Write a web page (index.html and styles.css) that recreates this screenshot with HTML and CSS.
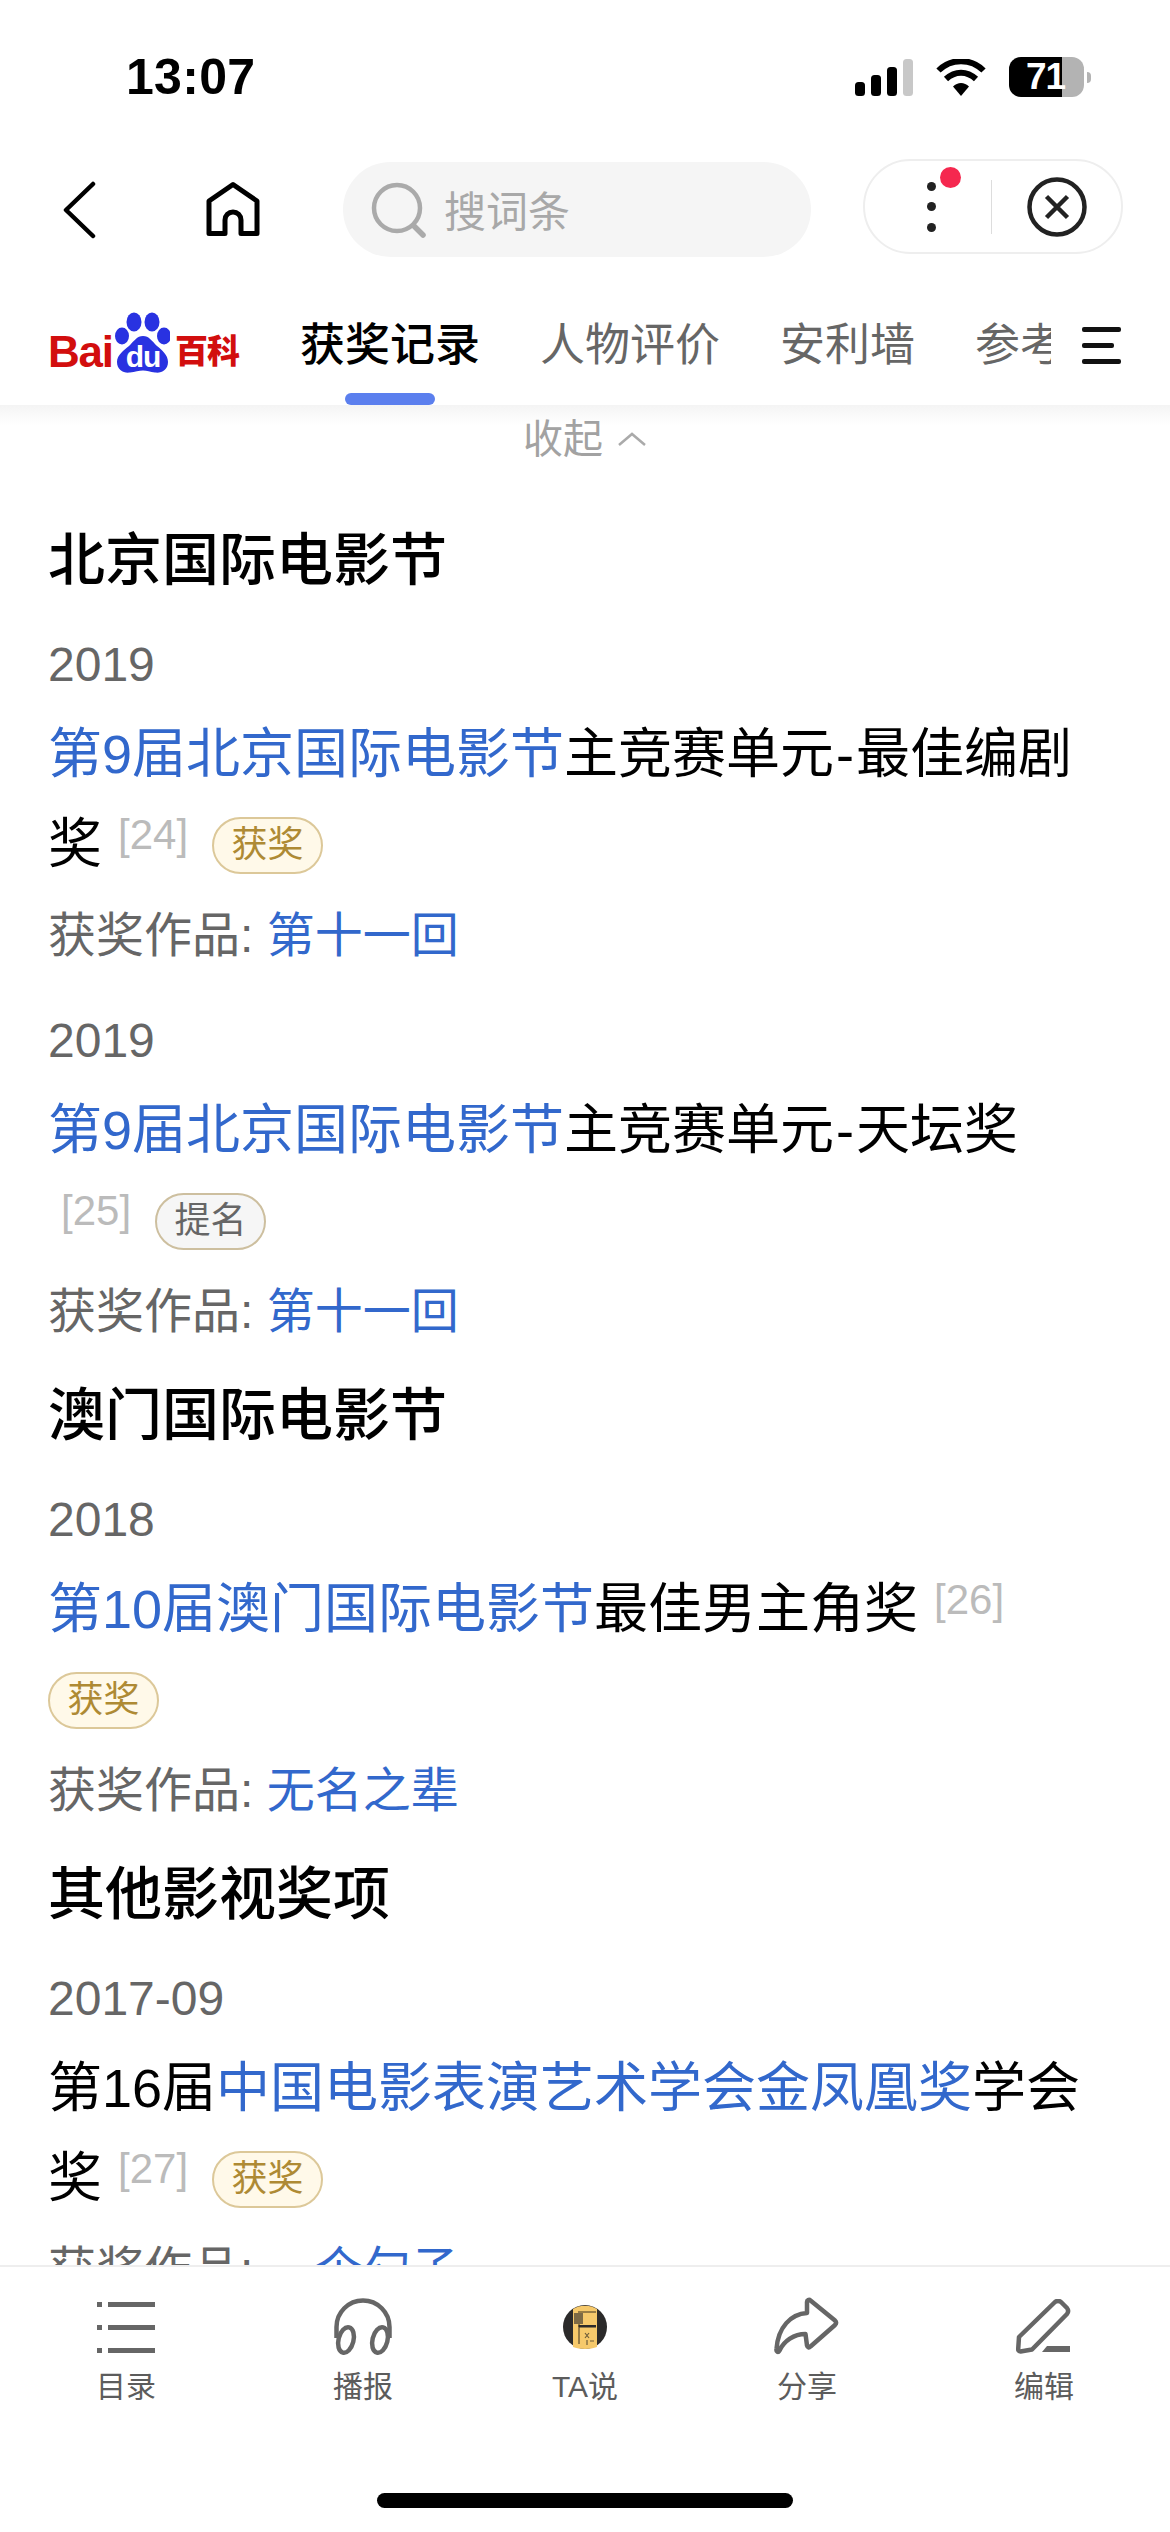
FILE: index.html
```html
<!DOCTYPE html>
<html lang="zh">
<head>
<meta charset="utf-8">
<title>获奖记录</title>
<link rel="stylesheet" href="styles.css">
</head>
<body>
<div class="page">
  <div class="status">
    <div class="time">13:07</div>
    <div class="status-icons">
      <svg class="ic-signal" width="58" height="37" viewBox="0 0 58 37">
        <rect x="0" y="23" width="10" height="14" rx="3.5" fill="#000"/>
        <rect x="16" y="16" width="10" height="21" rx="3.5" fill="#000"/>
        <rect x="32" y="8" width="10" height="29" rx="3.5" fill="#000"/>
        <rect x="48" y="0" width="10" height="37" rx="3.5" fill="#c8c8c8"/>
      </svg>
      <svg width="50" height="37" viewBox="0 0 50 37">
        <path d="M2.5 11.5C15 -1 35 -1 47.5 11.5" fill="none" stroke="#000" stroke-width="6"/>
        <path d="M10 20C19 11.5 31 11.5 40 20" fill="none" stroke="#000" stroke-width="6"/>
        <path d="M25 37L17 27.5C21.5 22.8 28.5 22.8 33 27.5Z" fill="#000"/>
      </svg>
      <div class="battery">
        <div class="battery-body"><span class="battery-level">71</span></div>
        <div class="battery-nub"></div>
      </div>
    </div>
  </div>

  <div class="nav">
    <svg class="nav-back" width="34" height="60" viewBox="0 0 34 60">
      <path d="M30 4L3 30L30 56" fill="none" stroke="#000" stroke-width="4.5" stroke-linecap="round" stroke-linejoin="round"/>
    </svg>
    <svg class="nav-home" width="54" height="58" viewBox="0 0 54 58">
      <path d="M27 3.500L51 20V52.500H35V39A8 8 0 0 0 19 39V52.500H3V20Z" fill="none" stroke="#000" stroke-width="5" stroke-linejoin="round"/>
    </svg>
    <div class="search">
      <svg width="56" height="56" viewBox="0 0 56 56">
        <circle cx="26" cy="26" r="23" fill="none" stroke="#aaa" stroke-width="4.500"/>
        <path d="M43 44L52 53" stroke="#aaa" stroke-width="5.500" stroke-linecap="round"/>
      </svg>
      <span class="search-text">搜词条</span>
    </div>
    <div class="capsule">
      <div class="dots">
        <i class="dot"></i><i class="dot"></i><i class="dot"></i>
        <i class="red-dot"></i>
      </div>
      <div class="cap-divider"></div>
      <svg width="60" height="60" viewBox="0 0 60 60">
        <circle cx="30" cy="30" r="27.500" fill="none" stroke="#222" stroke-width="4.500"/>
        <path d="M19.500 19.500L40.500 40.500M40.500 19.500L19.500 40.500" stroke="#222" stroke-width="4.500"/>
      </svg>
    </div>
  </div>

  <div class="tabs">
    <div class="logo">
      <span class="logo-bai">Bai</span>
      <svg class="logo-paw" width="56" height="62" viewBox="0 0 56 62">
        <ellipse cx="20" cy="10" rx="7.500" ry="9.500" fill="#2932e1"/>
        <ellipse cx="38" cy="10" rx="7.500" ry="9.500" fill="#2932e1"/>
        <ellipse cx="8" cy="24" rx="7" ry="8.500" fill="#2932e1"/>
        <ellipse cx="50" cy="24" rx="7" ry="8.500" fill="#2932e1"/>
        <path d="M29 24C35 24 38 29 43 34C48 38 54 43 54 50C54 58 47 61.500 41 60.500C36 60 33 58.500 29 58.500C25 58.500 21 60 16 60.500C10 61.500 3 58 3 50C3 43 10 38 15 34C20 29 23 24 29 24Z" fill="#2932e1"/>
        <text class="logo-du" x="29" y="55" text-anchor="middle">du</text>
      </svg>
      <span class="logo-cn">百科</span>
    </div>
    <div class="tab-list">
      <div class="tab tab-active">获奖记录<i class="tab-bar"></i></div>
      <div class="tab">人物评价</div>
      <div class="tab">安利墙</div>
      <div class="tab">参考资料</div>
    </div>
    <div class="menu"><i></i><i class="short"></i><i></i></div>
  </div>

  <main class="content">
    <div class="collapse">收起
      <svg width="30" height="16" viewBox="0 0 30 16"><path d="M2 14L15 3L28 14" fill="none" stroke="#aaa" stroke-width="2.500"/></svg>
    </div>
    <div class="list">
      <h2>北京国际电影节</h2>
      <div class="item">
        <div class="year">2019</div>
        <div class="title"><a>第9届北京国际电影节</a>主竞赛单元<span class="dash">-</span>最佳编剧<br>奖<sup>[24]</sup><span class="pill won">获奖</span></div>
        <div class="work">获奖作品: <a>第十一回</a></div>
      </div>
      <div class="item">
        <div class="year">2019</div>
        <div class="title"><a>第9届北京国际电影节</a>主竞赛单元<span class="dash">-</span>天坛奖<br><sup class="first">[25]</sup><span class="pill nom">提名</span></div>
        <div class="work">获奖作品: <a>第十一回</a></div>
      </div>
      <h2>澳门国际电影节</h2>
      <div class="item">
        <div class="year">2018</div>
        <div class="title"><a>第10届澳门国际电影节</a>最佳男主角奖<sup>[26]</sup><br><span class="pill won first-pill">获奖</span></div>
        <div class="work">获奖作品: <a>无名之辈</a></div>
      </div>
      <h2>其他影视奖项</h2>
      <div class="item">
        <div class="year">2017-09</div>
        <div class="title">第16届<a>中国电影表演艺术学会金凤凰奖</a>学会<br>奖<sup>[27]</sup><span class="pill won">获奖</span></div>
        <div class="work">获奖作品: <a>一个勺子</a></div>
      </div>
    </div>
  </main>

  <footer class="bottom">
    <div class="bottom-row">
      <div class="bottom-item">
        <div class="bottom-icon">
          <svg width="58" height="51" viewBox="0 0 58 51" fill="#666">
            <rect x="0" y="0" width="5" height="5"/><rect x="11" y="0" width="47" height="5"/>
            <rect x="0" y="23" width="5" height="5"/><rect x="11" y="23" width="47" height="5"/>
            <rect x="0" y="46" width="5" height="5"/><rect x="11" y="46" width="47" height="5"/>
          </svg>
        </div>
        <span>目录</span>
      </div>
      <div class="bottom-item">
        <div class="bottom-icon">
          <svg width="60" height="58" viewBox="0 0 60 58" fill="none" stroke="#666" stroke-width="4.500">
            <path d="M3.500 40V29A26.500 26.500 0 0 1 56.500 29V40"/>
            <ellipse cx="13" cy="42" rx="7.500" ry="13" transform="rotate(14 13 42)"/>
            <ellipse cx="47" cy="42" rx="7.500" ry="13" transform="rotate(14 47 42)"/>
          </svg>
        </div>
        <span>播报</span>
      </div>
      <div class="bottom-item">
        <div class="bottom-icon">
          <svg width="46" height="46" viewBox="0 0 46 46">
            <circle cx="23" cy="23" r="22" fill="#2b2a2a"/>
            <path d="M11 5C17 0.500 29 0.500 35 5V43C29 45.500 17 45.500 11 43Z" fill="#f6c96b"/>
            <path d="M16 8H34M17 14V40M16 22H34" stroke="#3a3020" stroke-width="1"/>
            <rect x="17" y="21" width="17" height="2.500" fill="#2b2a2a"/>
            <rect x="12" y="9" width="9" height="11" fill="#7d6a45"/>
            <path d="M23 29L27 34M27 29L23 34M25 36V41M28 37H32" stroke="#6d5c3a" stroke-width="1.200"/>
          </svg>
        </div>
        <span>TA说</span>
      </div>
      <div class="bottom-item">
        <div class="bottom-icon">
          <svg width="66" height="60" viewBox="0 0 66 60" fill="none" stroke="#666" stroke-width="4.500" stroke-linejoin="round">
            <path d="M33 16V5C33 3 35 2 36.500 3.500L61 23.500C62.500 25 62.500 26.500 61 28L36.500 49.500C35 51 33.500 50.500 33 48.500L31.500 37C20 37 10 44 5.500 53.500C4 56 2 55 2.500 52C4 30 17 17 33 16Z"/>
          </svg>
        </div>
        <span>分享</span>
      </div>
      <div class="bottom-item">
        <div class="bottom-icon">
          <svg width="56" height="56" viewBox="0 0 56 56">
            <path d="M3 38L39 3C41 1.500 43 1.500 45 3L51 9C52.500 11 52.500 13 51 15L16 50.500L4.500 52.500C3 52.500 2 51.500 2.200 50Z" fill="none" stroke="#666" stroke-width="4.500" stroke-linejoin="round"/>
            <path d="M31 47H54V53H26Z" fill="#666"/>
          </svg>
        </div>
        <span>编辑</span>
      </div>
    </div>
    <div class="home-bar"></div>
  </footer>
</div>
</body>
</html>
```

FILE: styles.css
```css
* { box-sizing: border-box; }
html, body { margin: 0; padding: 0; background: #fff; }
body { font-family: "Liberation Sans", "Noto Sans CJK SC", sans-serif; color: #000; }
i { display: block; font-style: normal; }
a { color: #3268cc; text-decoration: none; }

.page { width: 1170px; height: 2532px; display: flex; flex-direction: column; overflow: hidden; }

.status { height: 154px; flex: none; display: flex; align-items: center; justify-content: space-between; padding: 0 79px 0 126px; }
.time { font-size: 50px; font-weight: 700; line-height: 60px; letter-spacing: 0.3px; }
.status-icons { display: flex; align-items: center; gap: 23px; }
.battery { display: flex; align-items: center; gap: 3px; }
.battery-body { width: 75px; height: 40px; border-radius: 12px; background: linear-gradient(90deg, #000 0, #000 53px, #b3b3b3 53px); overflow: hidden; padding-left: 17px; }
.battery-level { display: block; color: #fff; font-size: 37px; font-weight: 700; line-height: 40px; letter-spacing: -1px; }
.battery-nub { width: 4px; height: 11px; background: #b3b3b3; border-radius: 0 6px 6px 0; }

.nav { height: 111px; flex: none; display: flex; align-items: center; padding-left: 63px; }
.nav-back { flex: none; }
.nav-home { flex: none; margin-left: 109px; }
.search { flex: none; margin-left: 83px; width: 468px; height: 95px; border-radius: 48px; background: #f5f5f5; display: flex; align-items: center; padding-left: 28px; gap: 17px; color: #a8a8a8; font-size: 42px; }
.search-text { margin-bottom: 3px; }
.capsule { flex: none; position: relative; margin-left: 52px; margin-bottom: 6px; width: 260px; height: 95px; border: 2px solid #eee; border-radius: 48px; display: flex; align-items: center; }
.dots { position: relative; width: 9px; margin-left: 62px; display: flex; flex-direction: column; gap: 11.500px; }
.dot { width: 9px; height: 9px; border-radius: 50%; background: #222; }
.red-dot { position: absolute; width: 21px; height: 21px; border-radius: 50%; background: #f5284f; left: 13px; top: -15px; }
.cap-divider { width: 1px; height: 54px; background: #ddd; margin-left: 55px; margin-right: 35px; }

.tabs { height: 140px; flex: none; display: flex; align-items: flex-start; position: relative; }
.logo { flex: none; width: 300px; padding: 43px 0 0 48px; display: flex; align-items: flex-end; height: 106px; color: #d20e0e; font-weight: 700; }
.logo-bai { font-size: 44px; line-height: 38px; letter-spacing: -1.200px; }
.logo-paw { flex: none; margin: 0 0 -3px 1px; }
.logo-du { fill: #fff; font-size: 30px; font-weight: 700; letter-spacing: -1px; }
.logo-cn { font-size: 33px; line-height: 38px; margin-left: 5px; font-weight: 900; letter-spacing: -1px; white-space: nowrap; }
.tab-list { flex: none; width: 751px; height: 140px; overflow: hidden; display: flex; gap: 60px; }
.tab { flex: none; position: relative; font-size: 45px; color: #666; line-height: 162px; height: 140px; }
.tab-active { color: #000; font-weight: 500; }
.tab-bar { position: absolute; left: 45px; bottom: 0; width: 90px; height: 12px; border-radius: 6px; background: #5b7fee; }
.menu { flex: none; margin: 62px 0 0 31px; width: 39px; display: flex; flex-direction: column; gap: 11px; }
.menu i { height: 5px; background: #111; border-radius: 2px; }
.menu .short { width: 32px; }

.content { flex: 1; min-height: 0; overflow: hidden; }
.collapse { height: 68px; background: linear-gradient(#f4f4f4 0, #fff 20px); display: flex; align-items: center; justify-content: center; gap: 14px; color: #a2a2a2; font-size: 40px; line-height: 68px; }
.list { padding: 43px 48px 0; }
h2 { margin: 4px 0 23px; font-size: 57px; font-weight: 500; line-height: 80px; }
.item { margin-bottom: 16px; }
.year { font-size: 48px; line-height: 84px; margin-bottom: 2px; color: #666; }
.title { font-size: 54px; line-height: 90px; }
.title sup { font-size: 42px; line-height: 1; color: #bbb; vertical-align: 14px; margin-left: 16px; }
.title sup.first { margin-left: 13px; }
.dash { margin: 0 2px; }
.work { font-size: 48px; line-height: 94px; color: #666; }

.pill { display: inline-flex; align-items: center; justify-content: center; width: 111px; height: 57px; margin-left: 24px; border-radius: 29px; font-size: 36px; line-height: 1; vertical-align: 6px; border: 2px solid; }
.pill.first-pill { margin-left: 0; }
.won { background: #fff9e9; border-color: #dcc899; color: #ae8a34; }
.nom { background: #f6f6f6; border-color: #cdbf9f; color: #666; }

.bottom { height: 267px; flex: none; background: #fff; border-top: 2px solid #eee; padding-top: 30px; }
.bottom-row { display: grid; grid-template-columns: 252px 222px 222px 222px 252px; }
.bottom-item { display: flex; flex-direction: column; align-items: center; font-size: 30px; line-height: 40px; color: #5c5c5c; }
.bottom-icon { height: 60px; margin-bottom: 10px; display: flex; align-items: center; justify-content: center; }
.home-bar { width: 416px; height: 15px; margin: 86px auto 0; border-radius: 8px; background: #000; }
```
